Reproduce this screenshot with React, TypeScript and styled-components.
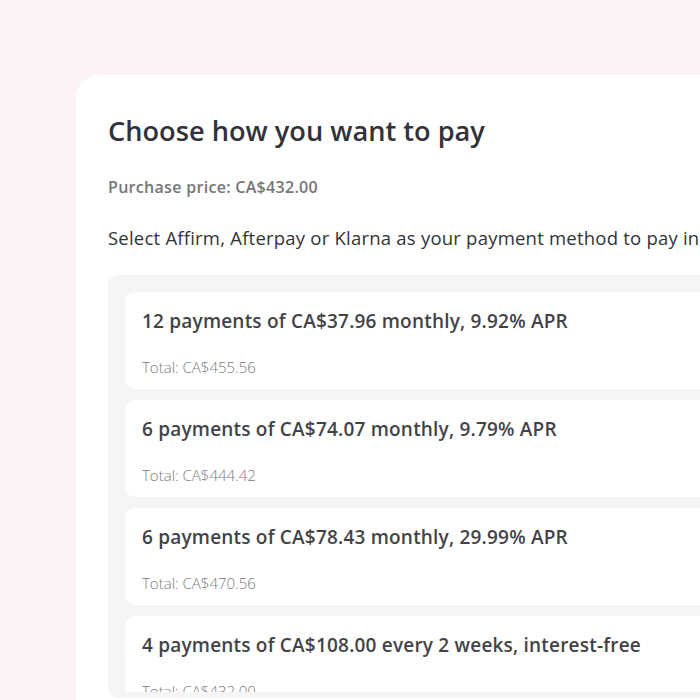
import styled, { createGlobalStyle } from "styled-components";

interface Plan {
  summary: string;
  total: string;
}

const plans: Plan[] = [
  { summary: "12 payments of CA$37.96 monthly, 9.92% APR", total: "CA$455.56" },
  { summary: "6 payments of CA$74.07 monthly, 9.79% APR", total: "CA$444.42" },
  { summary: "6 payments of CA$78.43 monthly, 29.99% APR", total: "CA$470.56" },
  {
    summary: "4 payments of CA$108.00 every 2 weeks, interest-free",
    total: "CA$432.00",
  },
];

const GlobalStyle = createGlobalStyle`
  html, body {
    margin: 0;
    padding: 0;
    background: #fcf4f4;
    overflow: hidden;
  }
  body {
    font-family: "Open Sans", "Noto Sans", sans-serif;
    -webkit-font-smoothing: antialiased;
  }
`;

function App() {
  return (
    <>
      <GlobalStyle />
      <Page>
        <Panel>
          <Title>Choose how you want to pay</Title>
          <Price>Purchase price: CA$432.00</Price>
          <Intro>
            Select Affirm, Afterpay or Klarna as your payment method to pay in
            instalments.
          </Intro>
          <Options>
            <Scroller>
              {plans.map((plan) => (
                <PlanCard key={plan.summary}>
                  <h3>{plan.summary}</h3>
                  <span>Total: {plan.total}</span>
                </PlanCard>
              ))}
            </Scroller>
          </Options>
        </Panel>
      </Page>
    </>
  );
}

const Page = styled.div`
  width: 700px;
  height: 700px;
  overflow: hidden;
  padding: 75px 0 0 76px;
  box-sizing: border-box;
`;

const Panel = styled.section`
  width: 760px;
  min-height: 700px;
  background: #ffffff;
  border-radius: 24px;
  padding: 39px 0 0 32px;
  box-sizing: border-box;
`;

const Title = styled.h1`
  margin: 0;
  font-size: 27.2px;
  line-height: 34px;
  font-weight: 600;
  color: #323238;
`;

const Price = styled.div`
  margin-top: 29px;
  font-size: 16px;
  line-height: 20px;
  font-weight: 600;
  letter-spacing: 0.3px;
  color: #767676;
`;

const Intro = styled.p`
  margin: 29px 0 0;
  font-size: 18.5px;
  line-height: 24px;
  letter-spacing: 0.22px;
  color: #333336;
  white-space: nowrap;
`;

const Options = styled.div`
  margin-top: 25px;
  background: #f5f5f5;
  border-radius: 10px;
  padding: 17px 17px 6px;
  height: 423px;
  box-sizing: border-box;
`;

const Scroller = styled.div`
  height: 400px;
  overflow: hidden;
  display: flex;
  flex-direction: column;
  gap: 11px;
`;

const PlanCard = styled.div`
  flex: 0 0 97px;
  background: #ffffff;
  border-radius: 10px;
  padding: 17px 17px 0;
  box-sizing: border-box;

  h3 {
    margin: 0;
    font-size: 19px;
    line-height: 24px;
    font-weight: 600;
    letter-spacing: 0.2px;
    color: #434347;
    white-space: nowrap;
  }

  span {
    display: block;
    margin-top: 24px;
    font-size: 15px;
    line-height: 20px;
    font-weight: 300;
    color: #7a7a7a;
  }
`;

export default App;
